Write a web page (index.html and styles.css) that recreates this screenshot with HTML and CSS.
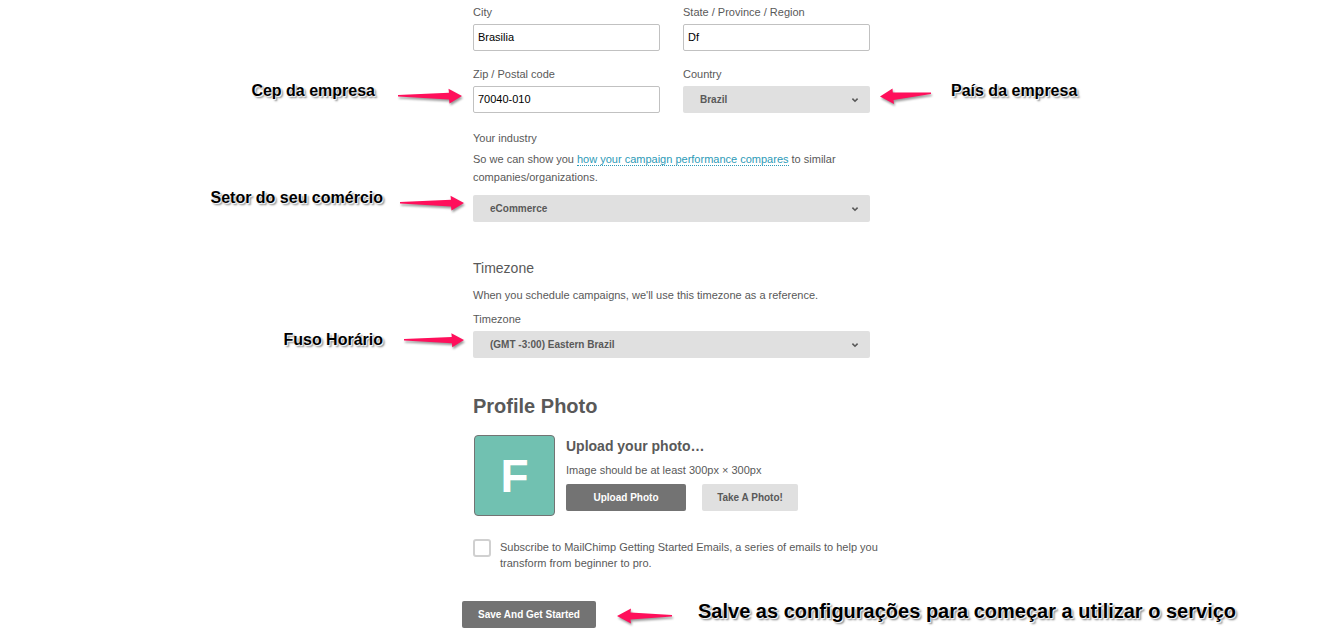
FILE: index.html
```html
<!DOCTYPE html>
<html lang="pt-BR">
<head>
<meta charset="utf-8">
<meta name="viewport" content="width=device-width, initial-scale=1">
<title>Account setup</title>
<link rel="stylesheet" href="styles.css">
</head>
<body>
<svg class="defs" aria-hidden="true">
  <symbol id="arrow-right" viewBox="0 0 64 24">
    <path d="M0 11 51 8.8 50.5 4.8 64 12 51.5 19.6 51 15.4 0 12.6z" fill="#ff0f5b"/>
  </symbol>
  <symbol id="arrow-left" viewBox="0 0 55 24">
    <path d="M0 12 14 4.4 13.5 8.6 55 11V12.6L13.5 15.4 14 19.6z" fill="#ff0f5b"/>
  </symbol>
  <symbol id="arrow-left-tilted" viewBox="0 0 55 24">
    <path d="M0 12.6 12.5 4.4 12.8 8.6 51 8.4V10L13.5 16 14 20z" fill="#ff0f5b"/>
  </symbol>
  <symbol id="chevron" viewBox="0 0 8 6">
    <path d="M1.4 1.6 4 4.2 6.6 1.6" fill="none" stroke="#595959" stroke-width="1.6"/>
  </symbol>
</svg>
<main class="page">
  <form class="form">
    <div class="grid">
      <div class="field">
        <label class="label" for="city">City</label>
        <input class="input" id="city" type="text" value="Brasilia">
      </div>
      <div class="field">
        <label class="label" for="state">State / Province / Region</label>
        <input class="input" id="state" type="text" value="Df">
      </div>
      <div class="field">
        <label class="label" for="zip">Zip / Postal code</label>
        <div class="control">
          <input class="input" id="zip" type="text" value="70040-010">
          <div class="callout callout-left callout-wide"><span>Cep da empresa</span><svg class="arrow arrow-long"><use href="#arrow-right"/></svg></div>
        </div>
      </div>
      <div class="field">
        <label class="label" for="country">Country</label>
        <div class="control">
          <select class="select" id="country"><option>Brazil</option></select>
          <svg class="chevron"><use href="#chevron"/></svg>
          <div class="callout callout-right"><svg class="arrow"><use href="#arrow-left-tilted"/></svg><span>País da empresa</span></div>
        </div>
      </div>
    </div>

    <div class="field industry">
      <label class="label" for="industry">Your industry</label>
      <p class="help">So we can show you <a class="link" href="#">how your campaign performance compares</a> to similar companies/organizations.</p>
      <div class="control">
        <select class="select" id="industry"><option>eCommerce</option></select>
        <svg class="chevron"><use href="#chevron"/></svg>
        <div class="callout callout-left callout-raised"><span>Setor do seu comércio</span><svg class="arrow arrow-long"><use href="#arrow-right"/></svg></div>
      </div>
    </div>

    <section class="timezone">
      <h3 class="subtitle">Timezone</h3>
      <p class="text">When you schedule campaigns, we'll use this timezone as a reference.</p>
      <label class="label" for="timezone">Timezone</label>
      <div class="control">
        <select class="select" id="timezone"><option>(GMT -3:00) Eastern Brazil</option></select>
        <svg class="chevron"><use href="#chevron"/></svg>
        <div class="callout callout-left callout-level"><span>Fuso Horário</span><svg class="arrow arrow-medium"><use href="#arrow-right"/></svg></div>
      </div>
    </section>

    <section class="profile">
      <h2 class="title">Profile Photo</h2>
      <div class="photo">
        <div class="avatar">F</div>
        <div>
          <h4 class="photo-title">Upload your photo…</h4>
          <p class="photo-text">Image should be at least 300px × 300px</p>
          <div class="actions">
            <button class="button button-dark button-upload" type="button">Upload Photo</button>
            <button class="button button-light" type="button">Take A Photo!</button>
          </div>
        </div>
      </div>
    </section>

    <label class="subscribe">
      <input class="checkbox" type="checkbox">
      <span>Subscribe to MailChimp Getting Started Emails, a series of emails to help you transform from beginner to pro.</span>
    </label>

    <div class="submit">
      <button class="button button-dark button-save" type="submit">Save And Get Started</button>
      <div class="callout callout-right callout-large"><svg class="arrow"><use href="#arrow-left"/></svg><span>Salve as configurações para começar a utilizar o serviço</span></div>
    </div>
  </form>
</main>
</body>
</html>
```
FILE: styles.css
```css
* { box-sizing: border-box; }

body {
  margin: 0;
  background: #fff;
  color: #595959;
  font: 11px/18px "Liberation Sans", Arial, sans-serif;
}

h2, h3, h4, p { margin: 0; }

.defs { position: absolute; width: 0; height: 0; }

.page { overflow-x: clip; padding: 3px 0 14px; }

.form { max-width: 400px; margin: 0 auto; padding-left: 3px; }

.grid {
  display: grid;
  grid-template-columns: 1fr 1fr;
  gap: 14px 23px;
}

.label { display: block; margin-bottom: 3px; }

.control { position: relative; }

.input, .select {
  display: block;
  width: 100%;
  height: 27px;
  font-family: inherit;
}

.input {
  padding: 0 4px 1px;
  border: 1px solid #c1c1c1;
  border-radius: 2px;
  background: #fff;
  color: #000;
  font-size: 11px;
}

.select {
  padding: 0 32px 0 17px;
  border: 0;
  border-radius: 2px;
  background: #e0e0e0;
  color: #595959;
  font-size: 10px;
  font-weight: bold;
  appearance: none;
}

.chevron {
  position: absolute;
  top: 11px;
  right: 11px;
  width: 8px;
  height: 6px;
  pointer-events: none;
}

.industry { margin-top: 16px; }

.help { margin-bottom: 9px; }

.link {
  color: #2c9ab7;
  text-decoration: none;
  border-bottom: 1px dotted #2c9ab7;
}

.timezone { margin-top: 36px; }

.subtitle {
  margin-bottom: 8px;
  font-size: 14px;
  line-height: 20px;
  font-weight: normal;
}

.text { margin-bottom: 6px; }

.profile { margin-top: 36px; }

.title { font-size: 20px; line-height: 24px; }

.photo {
  display: flex;
  gap: 11px;
  margin: 17px 0 0 1px;
}

.avatar {
  display: flex;
  flex: none;
  align-items: center;
  justify-content: center;
  width: 81px;
  height: 81px;
  border: 1px solid #737373;
  border-radius: 4px;
  background: #71c1b1;
  color: #fff;
  font-size: 46px;
  line-height: 46px;
  font-weight: bold;
}

.photo-title {
  margin: 2px 0 6px;
  font-size: 14px;
  line-height: 18px;
}

.photo-text { margin-bottom: 5px; }

.actions { display: flex; gap: 16px; }

.button {
  height: 27px;
  padding: 0 13px;
  border: 0;
  border-radius: 2px;
  font: bold 10px/18px "Liberation Sans", Arial, sans-serif;
  white-space: nowrap;
}

.button-dark { background: #737373; color: #fff; }
.button-light { min-width: 96px; background: #e0e0e0; color: #595959; }
.button-upload { min-width: 120px; }
.button-save { min-width: 134px; }

.subscribe {
  display: flex;
  align-items: flex-start;
  gap: 9px;
  margin: 23px -12px 0 0;
  line-height: 16px;
}

.checkbox {
  flex: none;
  width: 18px;
  height: 18px;
  margin: 0;
  border: 2px solid #d0d0d0;
  border-radius: 3px;
  background: #fff;
  appearance: none;
}

.submit {
  position: relative;
  width: max-content;
  margin: 30px 0 0 -11px;
}

/* Notes that point at a control from the margin of the page. */
.callout {
  position: absolute;
  top: -5px;
  display: flex;
  color: #000;
  font-size: 16px;
  line-height: 20px;
  font-weight: bold;
  white-space: nowrap;
  text-shadow: 0 0 2px #fff, 1px 1px 1px #fff, 2px 2px 2px #777;
}

.callout-left { right: 100%; gap: 17px; margin-right: 9px; }
.callout-wide { gap: 23px; margin-right: 11px; }
.callout-right { left: 100%; gap: 16px; margin-left: 10px; }
.callout-raised { top: -7px; }
.callout-level { top: -3px; gap: 21px; align-items: center; }

.callout-large {
  top: 0;
  gap: 26px;
  margin-left: 21px;
  font-size: 20px;
}

.arrow {
  flex: none;
  width: 55px;
  height: 24px;
  margin-top: 3px;
  filter: drop-shadow(1px 2px 1px #999);
}

.arrow-long { width: 64px; }
.arrow-medium { width: 60px; margin-top: 0; }
```
